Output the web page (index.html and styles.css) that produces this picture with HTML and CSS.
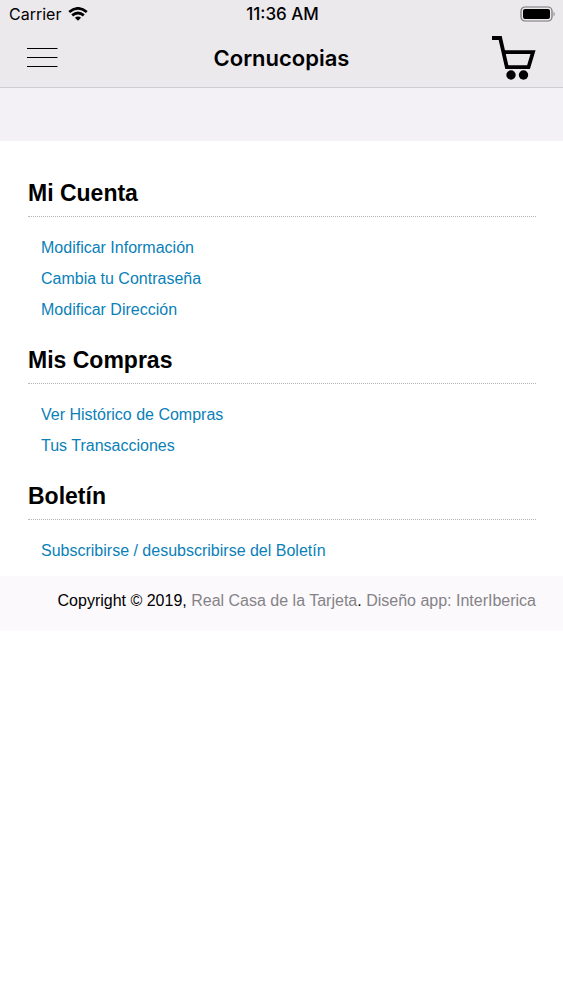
FILE: index.html
```html
<!DOCTYPE html>
<html lang="es">
<head>
    <meta charset="UTF-8">
    <meta name="viewport" content="width=device-width, initial-scale=1.0">
    <title>Cornucopias</title>
    <link rel="stylesheet" href="styles.css">
</head>
<body>
    <header class="header">
        <div class="status-bar">
            <div class="carrier">
                <span>Carrier</span>
                <svg width="20" height="14" viewBox="0 0 20 14" fill="none" stroke="#000" stroke-width="2.8">
                    <path d="M1.2 5 Q10 -2.2 18.8 5"/>
                    <path d="M4.2 8.4 Q10 3.6 15.8 8.4"/>
                    <path d="M6.9 10.8 Q10 8.2 13.1 10.8 L10 13.8 Z" fill="#000" stroke="none"/>
                </svg>
            </div>
            <span class="time">11:36 AM</span>
            <svg class="battery" width="36" height="16" viewBox="0 0 36 16">
                <rect x="1" y="1" width="31" height="14" rx="4" fill="none" stroke="#77757a" stroke-width="1.2"/>
                <rect x="3" y="3" width="27" height="10" rx="2" fill="#000"/>
                <path d="M33.6 5.5 Q35.6 8 33.6 10.5 Z" fill="#77757a"/>
            </svg>
        </div>
        <div class="nav-bar">
            <button class="icon-button" type="button" aria-label="Menú">
                <svg width="31" height="21" viewBox="0 0 31 21" stroke="#000" stroke-width="1.2">
                    <path d="M0 1.5H30.5M0 10.5H30.5M0 19.5H30.5"/>
                </svg>
            </button>
            <h1>Cornucopias</h1>
            <button class="icon-button cart" type="button" aria-label="Carrito">
                <svg width="44" height="46" viewBox="0 0 44 46" fill="none" stroke="#000" stroke-width="3.8">
                    <path d="M0 3H8.2L14.8 32.2H36.5L41 17.2H11.4"/>
                    <circle cx="19" cy="40" r="4.7" fill="#000" stroke="none"/>
                    <circle cx="31.5" cy="40" r="4.7" fill="#000" stroke="none"/>
                </svg>
            </button>
        </div>
    </header>

    <div class="banner"></div>

    <main class="account">
        <section>
            <h2>Mi Cuenta</h2>
            <ul>
                <li><a href="#">Modificar Información</a></li>
                <li><a href="#">Cambia tu Contraseña</a></li>
                <li><a href="#">Modificar Dirección</a></li>
            </ul>
        </section>
        <section>
            <h2>Mis Compras</h2>
            <ul>
                <li><a href="#">Ver Histórico de Compras</a></li>
                <li><a href="#">Tus Transacciones</a></li>
            </ul>
        </section>
        <section>
            <h2>Boletín</h2>
            <ul>
                <li><a href="#">Subscribirse / desubscribirse del Boletín</a></li>
            </ul>
        </section>
    </main>

    <footer class="footer">
        Copyright © 2019, <a href="#">Real Casa de la Tarjeta</a>. <a href="#">Diseño app: InterIberica</a>
    </footer>
</body>
</html>
```
FILE: styles.css
```css
:root {
    --bar: #ebe9ec;
    --banner: #f3f1f5;
    --footer: #fbf9fc;
    --link: #0a7fb8;
    --muted: #858387;
}

body {
    margin: 0;
    background: #ffffff;
    color: #000000;
    font-family: "Liberation Sans", Arial, sans-serif;
    font-size: 16px;
}

a {
    color: var(--link);
    text-decoration: none;
}

svg {
    display: block;
}

.header {
    background: var(--bar);
    border-bottom: 1px solid #cfcdd1;
    font-family: Inter, sans-serif;
}

.status-bar {
    display: grid;
    grid-template-columns: 1fr auto 1fr;
    align-items: center;
    height: 28px;
    padding: 0 7px 0 9px;
    font-size: 16px;
}

.carrier {
    display: flex;
    align-items: center;
    gap: 7px;
}

.time {
    font-size: 17px;
    font-weight: 500;
}

.battery {
    justify-self: end;
}

.nav-bar {
    display: grid;
    grid-template-columns: 1fr auto 1fr;
    align-items: center;
    height: 59px;
    padding: 0 27px;
}

.nav-bar h1 {
    margin: 0;
    font-size: 22px;
    font-weight: 600;
}

.icon-button {
    justify-self: start;
    padding: 0;
    border: none;
    background: none;
    cursor: pointer;
}

.icon-button.cart {
    justify-self: end;
}

.banner {
    height: 53px;
    background: var(--banner);
}

.account {
    padding: 37px 27px 10px 28px;
}

.account section + section {
    margin-top: 20px;
}

.account h2 {
    margin: 0 0 15px;
    padding-bottom: 8px;
    border-bottom: 1px dotted #b5b5b5;
    font-size: 23px;
    line-height: 30px;
}

.account ul {
    margin: 0;
    padding: 0 13px;
    list-style: none;
}

.account li {
    line-height: 31px;
}

.footer {
    padding: 15px 27px 20px;
    background: var(--footer);
    line-height: 20px;
    text-align: right;
}

.footer a {
    color: var(--muted);
}
```
